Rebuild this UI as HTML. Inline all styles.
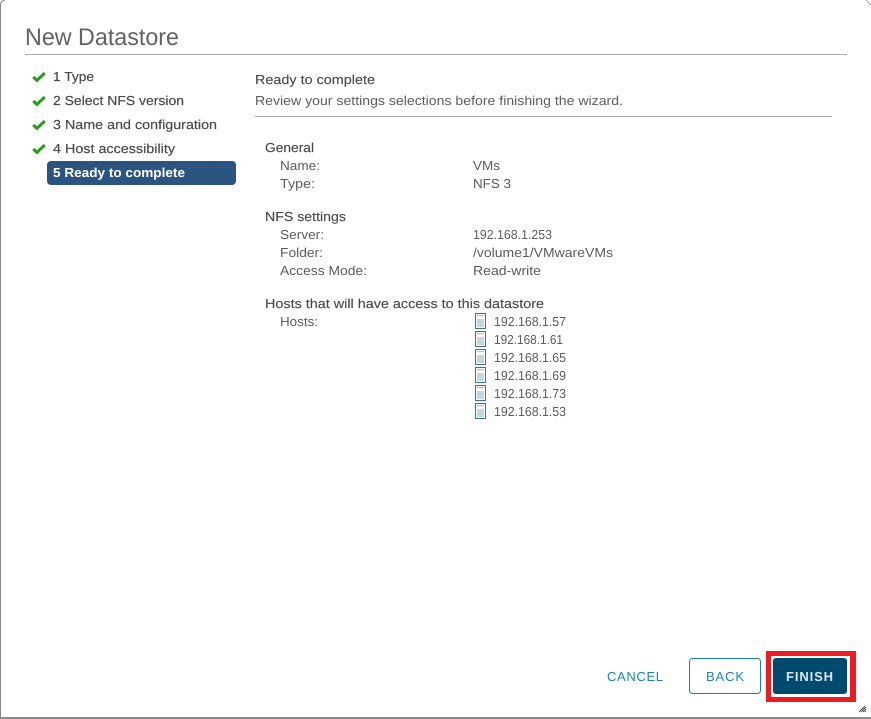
<!DOCTYPE html>
<html>
<head>
<meta charset="utf-8">
<style>
html,body{margin:0;padding:0;width:871px;height:719px;overflow:hidden;background:#fff}
svg{display:block;position:absolute;left:0;top:0}
text{font-family:"Liberation Sans",sans-serif;font-size:13px;fill:#5c5c5c;text-rendering:geometricPrecision}
.b{fill:#4a4a4a;font-size:13px;stroke:#4a4a4a;stroke-width:.15}
.n{fill:#4a4a4a;font-size:13px;stroke:#4a4a4a;stroke-width:.2}
</style>
</head>
<body>
<svg width="871" height="719" viewBox="0 0 871 719" xmlns="http://www.w3.org/2000/svg">
<defs>
<symbol id="c" viewBox="0 0 14 12"><path d="M1.2 6 L5 9.4 L12.8 2" fill="none" stroke="#2f9a1c" stroke-width="3"/></symbol>
<symbol id="h" viewBox="0 0 11 16"><rect x=".5" y=".5" width="10" height="15" fill="#fff" stroke="#34749b"/><rect x="2" y="6" width="7" height="8" fill="#c6d6df"/><rect x="2" y="2" width="7" height="1.2" fill="#aec4d1"/></symbol>
</defs>
<rect width="871" height="719" fill="#fff"/>
<path d="M.5 719V5Q.5 .5 5 .5" fill="none" stroke="#8a8a8a"/>
<rect x="0" y="717" width="871" height="2" fill="#8c8c8c"/>
<rect x="869" y="3" width="2" height="714" fill="#fff"/>
<path d="M866 0 L871 5" stroke="#aaa" fill="none"/>

<text x="25" y="45" style="font-size:24px;fill:#636363" textLength="154" lengthAdjust="spacingAndGlyphs">New Datastore</text>
<rect x="25" y="54" width="822" height="1" fill="#a9a9a9"/>

<use href="#c" x="32" y="71" width="14" height="12"/>
<use href="#c" x="32" y="95" width="14" height="12"/>
<use href="#c" x="32" y="119" width="14" height="12"/>
<use href="#c" x="32" y="143" width="14" height="12"/>
<text class="n" x="53" y="81" textLength="41" lengthAdjust="spacingAndGlyphs">1 Type</text>
<text class="n" x="53" y="105" textLength="131" lengthAdjust="spacingAndGlyphs">2 Select NFS version</text>
<text class="n" x="53" y="129" textLength="164" lengthAdjust="spacingAndGlyphs">3 Name and configuration</text>
<text class="n" x="53" y="153" textLength="122" lengthAdjust="spacingAndGlyphs">4 Host accessibility</text>
<rect x="47" y="161" width="189" height="24" rx="4" fill="#2b5480"/>
<text x="53" y="177" style="fill:#fff;font-weight:bold" textLength="132" lengthAdjust="spacingAndGlyphs">5 Ready to complete</text>

<text class="b" x="255" y="84" textLength="120" lengthAdjust="spacingAndGlyphs">Ready to complete</text>
<text x="255" y="105" textLength="368" lengthAdjust="spacingAndGlyphs">Review your settings selections before finishing the wizard.</text>
<rect x="255" y="116" width="577" height="1" fill="#b0b0b0"/>

<text class="b" x="265" y="152" textLength="49" lengthAdjust="spacingAndGlyphs">General</text>
<text x="280" y="170" textLength="40" lengthAdjust="spacingAndGlyphs">Name:</text>
<text x="473" y="170" textLength="27" lengthAdjust="spacingAndGlyphs">VMs</text>
<text x="280" y="188" textLength="35" lengthAdjust="spacingAndGlyphs">Type:</text>
<text x="473" y="188" textLength="38" lengthAdjust="spacingAndGlyphs">NFS 3</text>

<text class="b" x="265" y="221" textLength="81" lengthAdjust="spacingAndGlyphs">NFS settings</text>
<text x="280" y="239" textLength="44" lengthAdjust="spacingAndGlyphs">Server:</text>
<text x="473" y="239" textLength="79" lengthAdjust="spacingAndGlyphs">192.168.1.253</text>
<text x="280" y="257" textLength="43" lengthAdjust="spacingAndGlyphs">Folder:</text>
<text x="473" y="257" textLength="140" lengthAdjust="spacingAndGlyphs">/volume1/VMwareVMs</text>
<text x="280" y="275" textLength="87" lengthAdjust="spacingAndGlyphs">Access Mode:</text>
<text x="473" y="275" textLength="68" lengthAdjust="spacingAndGlyphs">Read-write</text>

<text class="b" x="265" y="308" textLength="279" lengthAdjust="spacingAndGlyphs">Hosts that will have access to this datastore</text>
<text x="280" y="326" textLength="38" lengthAdjust="spacingAndGlyphs">Hosts:</text>

<use href="#h" x="475" y="313" width="11" height="16"/>
<use href="#h" x="475" y="331" width="11" height="16"/>
<use href="#h" x="475" y="349" width="11" height="16"/>
<use href="#h" x="475" y="367" width="11" height="16"/>
<use href="#h" x="475" y="385" width="11" height="16"/>
<use href="#h" x="475" y="403" width="11" height="16"/>
<text x="494" y="326" textLength="72" lengthAdjust="spacingAndGlyphs">192.168.1.57</text>
<text x="494" y="344" textLength="69" lengthAdjust="spacingAndGlyphs">192.168.1.61</text>
<text x="494" y="362" textLength="72" lengthAdjust="spacingAndGlyphs">192.168.1.65</text>
<text x="494" y="380" textLength="72" lengthAdjust="spacingAndGlyphs">192.168.1.69</text>
<text x="494" y="398" textLength="72" lengthAdjust="spacingAndGlyphs">192.168.1.73</text>
<text x="494" y="416" textLength="72" lengthAdjust="spacingAndGlyphs">192.168.1.53</text>

<text x="607" y="681" style="fill:#1a83bd;font-size:13px" textLength="56" lengthAdjust="spacing">CANCEL</text>
<rect x="689.5" y="658.5" width="71" height="35" rx="3" fill="#fff" stroke="#1a7fb5"/>
<text x="706" y="681" style="fill:#1a83bd;font-size:13px" textLength="38" lengthAdjust="spacing">BACK</text>

<rect x="766" y="651" width="90" height="51" fill="#ec1c24"/>
<rect x="771" y="656" width="79" height="41" fill="#fff"/>
<rect x="773" y="658" width="74" height="36" rx="3" fill="#004a70"/>
<text x="786" y="681" style="fill:#d7e6ee;font-size:13px;font-weight:bold" textLength="47" lengthAdjust="spacing">FINISH</text>

<path d="M859 712 L865 706 M861 712 L866 707 M863 712 L866 709 M865 712 L866 711" stroke="#555" stroke-width="1" fill="none"/>
</svg>
</body>
</html>
